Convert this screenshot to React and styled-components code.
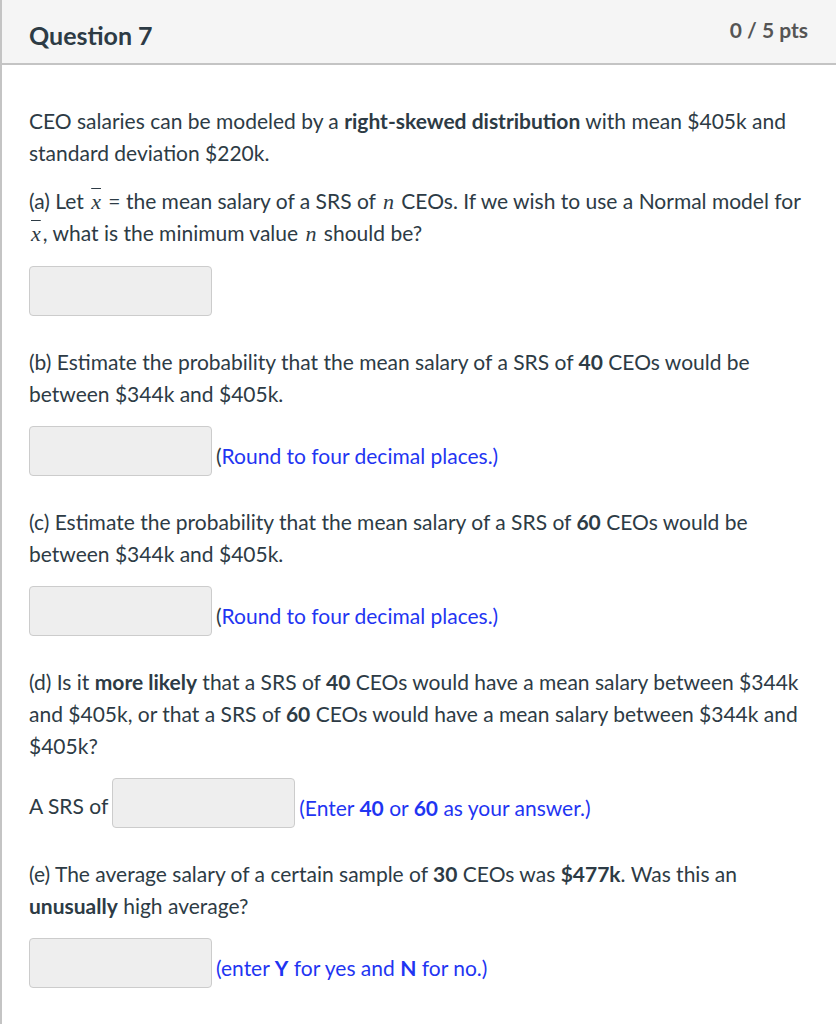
import React from 'react'
import styled, { createGlobalStyle } from 'styled-components'

const GlobalStyle = createGlobalStyle`
  html, body {
    margin: 0;
    padding: 0;
    background: #ffffff;
  }
  body {
    font-family: Lato, "Open Sans", "Liberation Sans", sans-serif;
    color: #2d3b45;
  }
`;

const Hint = ({ children, darkParen }) => (
  <HintText>
    <Paren $dark={darkParen}>(</Paren>
    {children}
  </HintText>
)

const App = () => {
  return (
    <>
      <GlobalStyle />
      <Card>
        <Header>
          <Title>Question 7</Title>
          <Points>0 / 5 pts</Points>
        </Header>
        <Body>
          <Para>
            CEO salaries can be modeled by a <b>right-skewed distribution</b> with mean $405k and
            standard deviation $220k.
          </Para>
          <Para $extra>
            (a) Let <Bar>x</Bar> = the mean salary of a SRS of <MathVar>n</MathVar> CEOs. If we wish
            to use a Normal model for <Bar>x</Bar>, what is the minimum value <MathVar>n</MathVar> should be?
          </Para>
          <AnswerRow>
            <AnswerBox type="text" />
          </AnswerRow>

          <Para>
            (b) Estimate the probability that the mean salary of a SRS of <b>40</b> CEOs would be
            between $344k and $405k.
          </Para>
          <AnswerRow>
            <AnswerBox type="text" />
            <Hint darkParen>Round to four decimal places.)</Hint>
          </AnswerRow>

          <Para>
            (c) Estimate the probability that the mean salary of a SRS of <b>60</b> CEOs would be
            between $344k and $405k.
          </Para>
          <AnswerRow>
            <AnswerBox type="text" />
            <Hint darkParen>Round to four decimal places.)</Hint>
          </AnswerRow>

          <Para>
            (d) Is it <b>more likely</b> that a SRS of <b>40</b> CEOs would have a mean salary between $344k
            and $405k, or that a SRS of <b>60</b> CEOs would have a mean salary between $344k and
            $405k?
          </Para>
          <AnswerRow>
            <Label>A SRS of</Label>
            <AnswerBox type="text" />
            <Hint>Enter <b>40</b> or <b>60</b> as your answer.)</Hint>
          </AnswerRow>

          <Para>
            (e) The average salary of a certain sample of <b>30</b> CEOs was <b>$477k</b>. Was this an{' '}
            <b>unusually</b> high average?
          </Para>
          <AnswerRow>
            <AnswerBox type="text" />
            <Hint>enter <b>Y</b> for yes and <b>N</b> for no.)</Hint>
          </AnswerRow>
        </Body>
      </Card>
    </>
  )
}

export default App

const Card = styled.div`
  min-height: 1024px;
  border-left: 2px solid #c4c4c4;
  background: #ffffff;
`;

const Header = styled.div`
  display: flex;
  justify-content: space-between;
  align-items: flex-start;
  height: 65px;
  box-sizing: border-box;
  padding: 0 28px 0 27px;
  background: #f5f5f5;
  border-bottom: 2px solid #c4c4c4;
`;

const Title = styled.h2`
  margin: 0;
  padding-top: 20px;
  font-size: 25px;
  line-height: 30px;
  font-weight: 700;
  color: #2d3b45;
`;

const Points = styled.span`
  padding-top: 16px;
  font-size: 21px;
  line-height: 28px;
  font-weight: 700;
  color: #555555;
`;

const Body = styled.div`
  padding: 40px 30px 0 27px;
`;

const Para = styled.p`
  margin: 0 0 ${(props) => (props.$extra ? '17px' : '16px')};
  font-size: 21px;
  line-height: 32px;
  b {
    font-weight: 700;
  }
`;

const Bar = styled.span`
  font-family: "Liberation Serif", "DejaVu Serif", serif;
  font-style: italic;
  font-size: 22px;
  line-height: 1;
  text-decoration: overline;
  text-decoration-thickness: 1px;
  padding: 0 2px;
`;

const MathVar = styled.span`
  font-family: "Liberation Serif", "DejaVu Serif", serif;
  font-style: italic;
  font-size: 22px;
  line-height: 1;
  padding: 0 2px;
`;

const AnswerRow = styled.div`
  display: flex;
  align-items: center;
  gap: 4px;
  margin: 0 0 30px;
  font-size: 21px;
`;

const Label = styled.span`
  padding-top: 4px;
  color: #2d3b45;
`;

const AnswerBox = styled.input`
  width: 183px;
  height: 50px;
  box-sizing: border-box;
  margin: 0;
  padding: 0 8px;
  background: #eeeeee;
  border: 1px solid #cccccc;
  border-radius: 4px;
  outline: none;
`;

const HintText = styled.span`
  padding-top: 8px;
  font-size: 21px;
  color: #1f35f2;
  b {
    font-weight: 700;
  }
`;

const Paren = styled.span`
  color: ${(props) => (props.$dark ? '#2d3b45' : '#1f35f2')};
`;
